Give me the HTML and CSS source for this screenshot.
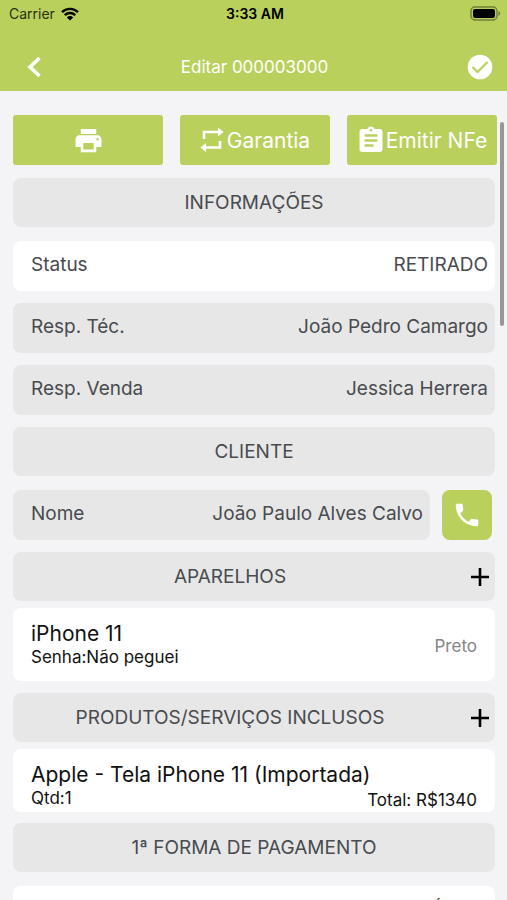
FILE: index.html
```
<!DOCTYPE html>
<html lang="pt-BR">
<head>
  <meta charset="UTF-8">
  <meta name="viewport" content="width=device-width, initial-scale=1.0">
  <title>Editar 000003000</title>
  <link rel="stylesheet" href="styles.css">
</head>
<body>
  <header class="header">
    <div class="status-bar">
      <div class="carrier">
        <span>Carrier</span>
        <svg width="18" height="14" viewBox="0 0 18 14">
          <path d="M1 5.2a11.4 11.4 0 0 1 16 0M3.8 8.1a7.4 7.4 0 0 1 10.4 0" fill="none" stroke="#000" stroke-width="2.4"/>
          <path d="M9 13.6L5.8 10.4a4.6 4.6 0 0 1 6.4 0z"/>
        </svg>
      </div>
      <span class="time">3:33 AM</span>
      <div class="battery">
        <svg width="31" height="15" viewBox="0 0 31 15">
          <rect x="1" y="1" width="26" height="13" rx="4" fill="none" stroke="#000" stroke-opacity=".4" stroke-width="1.4"/>
          <rect x="3" y="3" width="22" height="9" rx="2"/>
          <path d="M28.5 5v5c1-.4 1.7-1.4 1.7-2.5S29.5 5.4 28.5 5z" fill-opacity=".4"/>
        </svg>
      </div>
    </div>
    <nav class="nav-bar">
      <button class="icon-btn back" aria-label="Voltar">
        <svg width="16" height="24" viewBox="0 0 16 24"><path d="M13.5 3L4 12l9.500 9" fill="none" stroke="#fff" stroke-width="3.6"/></svg>
      </button>
      <h1>Editar 000003000</h1>
      <button class="icon-btn save" aria-label="Salvar">
        <svg width="26" height="26" viewBox="0 0 26 26"><circle cx="13" cy="13" r="12.3" fill="#fff"/><path d="M5.500 13l5 5L20.500 8" fill="none" stroke="#b9d05c" stroke-width="2.2"/></svg>
      </button>
    </nav>
  </header>

  <main class="content">
    <div class="actions">
      <button class="action" aria-label="Imprimir">
        <svg width="31" height="31" viewBox="0 0 24 24"><path d="M19 8H5c-1.66 0-3 1.34-3 3v6h4v4h12v-4h4v-6c0-1.66-1.34-3-3-3zm-3 11H8v-5h8v5zm3-7c-.55 0-1-.45-1-1s.45-1 1-1 1 .45 1 1-.45 1-1 1zm-1-9H6v4h12V3z" fill="#fff"/></svg>
      </button>
      <button class="action">
        <svg width="24" height="26" viewBox="0 0 24 26"><path d="M4 12V5h15M20 14v6.500H5" fill="none" stroke="#fff" stroke-width="2.6"/><path d="M18 .5l5.500 4.500-5.500 4.500zM6 16L.5 20.500 6 25z" fill="#fff"/></svg>
        <span>Garantia</span>
      </button>
      <button class="action">
        <svg width="28" height="31" viewBox="1 0 22 24"><path d="M19 3h-4.180C14.4 1.84 13.3 1 12 1s-2.4.84-2.820 2H5c-1.1 0-2 .9-2 2v14c0 1.1.9 2 2 2h14c1.1 0 2-.9 2-2V5c0-1.1-.9-2-2-2zm-7 0c.55 0 1 .45 1 1s-.45 1-1 1-1-.45-1-1 .45-1 1-1zm2 14H7v-2h7v2zm3-4H7v-2h10v2zm0-4H7V7h10v2z" fill="#fff"/></svg>
        <span>Emitir NFe</span>
      </button>
    </div>

    <h2 class="section">INFORMAÇÕES</h2>
    <div class="field editable">
      <label for="status">Status</label>
      <select id="status"><option>RETIRADO</option></select>
    </div>
    <div class="field">
      <label for="tecnico">Resp. Téc.</label>
      <input id="tecnico" type="text" value="João Pedro Camargo" readonly>
    </div>
    <div class="field">
      <label for="venda">Resp. Venda</label>
      <input id="venda" type="text" value="Jessica Herrera" readonly>
    </div>

    <h2 class="section">CLIENTE</h2>
    <div class="client">
      <div class="field">
        <label for="nome">Nome</label>
        <input id="nome" type="text" value="João Paulo Alves Calvo" readonly>
      </div>
      <button class="call" aria-label="Ligar">
        <svg width="30" height="30" viewBox="0 0 24 24"><path d="M6.62 10.79c1.44 2.83 3.76 5.14 6.59 6.59l2.2-2.2c.27-.27.67-.36 1.02-.24 1.12.37 2.33.57 3.57.57.55 0 1 .45 1 1V20c0 .55-.45 1-1 1-9.39 0-17-7.61-17-17 0-.55.45-1 1-1h3.5c.55 0 1 .45 1 1 0 1.25.2 2.45.57 3.57.11.35.03.74-.25 1.02l-2.2 2.2z" fill="#fff"/></svg>
      </button>
    </div>

    <div class="section with-add">
      <h2>APARELHOS</h2>
      <button class="icon-btn add" aria-label="Adicionar aparelho">
        <svg width="18" height="18" viewBox="0 0 18 18"><path d="M9 0v18M0 9h18" stroke="#000" stroke-width="2.6"/></svg>
      </button>
    </div>
    <article class="item device">
      <div>
        <h3>iPhone 11</h3>
        <p>Senha:Não peguei</p>
      </div>
      <span class="color">Preto</span>
    </article>

    <div class="section with-add">
      <h2>PRODUTOS/SERVIÇOS INCLUSOS</h2>
      <button class="icon-btn add" aria-label="Adicionar produto">
        <svg width="18" height="18" viewBox="0 0 18 18"><path d="M9 0v18M0 9h18" stroke="#000" stroke-width="2.6"/></svg>
      </button>
    </div>
    <article class="item product">
      <h3>Apple - Tela iPhone 11 (Importada)</h3>
      <div class="totals">
        <p>Qtd:1</p>
        <p class="total">Total: R$1340</p>
      </div>
    </article>

    <h2 class="section">1ª FORMA DE PAGAMENTO</h2>
    <div class="field editable">
      <select id="forma" aria-label="Forma de pagamento"><option>CRÉDITO</option></select>
    </div>
  </main>
  <div class="scroll-indicator"></div>
</body>
</html>
```
FILE: styles.css
```
* {
  box-sizing: border-box;
}

body {
  margin: 0;
  height: 100vh;
  display: flex;
  flex-direction: column;
  overflow: hidden;
  position: relative;
  background: #f4f4f6;
  color: #484b4f;
  font-family: Inter, "Liberation Sans", sans-serif;
  font-size: 19px;
}

h1, h2, h3, p {
  margin: 0;
  font-weight: 400;
}

h2 {
  font-size: 19px;
}

button, input, select {
  font: inherit;
  color: inherit;
  border: none;
  background: none;
  padding: 0;
  margin: 0;
}

button {
  cursor: pointer;
}

svg {
  display: block;
  flex: none;
}

.header {
  flex: none;
  background: #b9d05c;
}

.status-bar {
  display: grid;
  grid-template-columns: 1fr auto 1fr;
  align-items: center;
  height: 27px;
  padding: 0 6px 0 9px;
  color: #000;
  font-size: 14px;
}

.carrier {
  display: flex;
  align-items: center;
  gap: 6px;
  color: #26300c;
}

.time {
  font-weight: 600;
}

.battery {
  justify-self: end;
}

.nav-bar {
  display: flex;
  align-items: center;
  justify-content: space-between;
  height: 64px;
  padding: 16px 14px 0 26px;
}

.nav-bar h1 {
  color: #fff;
  font-size: 17px;
}

.content {
  flex: 1;
  min-height: 0;
  overflow-y: auto;
  scrollbar-width: none;
  padding: 24px 12px 0 13px;
}

.actions {
  display: grid;
  grid-template-columns: 1fr 1fr 1fr;
  gap: 17px;
  margin-right: -2px;
  margin-bottom: 13px;
}

.action {
  display: flex;
  align-items: center;
  justify-content: center;
  gap: 3px;
  height: 50px;
  border-radius: 3px;
  background: #b9d05c;
  color: #fff;
  font-size: 21px;
  white-space: nowrap;
}

.action:last-child {
  gap: 1px;
}

.section {
  display: flex;
  align-items: center;
  justify-content: center;
  height: 49px;
  margin-bottom: 14px;
  border-radius: 8px;
  background: #e7e7e7;
}

.with-add {
  margin-bottom: 7px;
}

.with-add h2 {
  flex: 1;
  text-align: center;
}

.add {
  display: flex;
  justify-content: flex-end;
  width: 48px;
  padding-right: 6px;
}

.field {
  display: flex;
  align-items: center;
  height: 50px;
  margin-bottom: 12px;
  padding: 0 7px 3px 18px;
  border-radius: 8px;
  background: #e7e7e7;
}

.field label {
  flex: none;
}

.field input,
.field select {
  flex: 1;
  min-width: 0;
  text-align: right;
  text-align-last: right;
  appearance: none;
  outline: none;
}

.editable {
  background: #fff;
}

.client {
  display: flex;
  gap: 12px;
  padding-right: 3px;
}

.client .field {
  flex: 1;
}

.call {
  display: flex;
  align-items: center;
  justify-content: center;
  width: 50px;
  height: 50px;
  border-radius: 8px;
  background: #b9d05c;
}

.item {
  margin-bottom: 12px;
  padding: 13px 18px 0;
  border-radius: 8px;
  background: #fff;
  color: #111;
}

.item h3 {
  font-size: 21px;
  line-height: 26px;
}

.item p {
  font-size: 17px;
  line-height: 20px;
}

.device {
  display: flex;
  justify-content: space-between;
  height: 73px;
}

.color {
  padding-top: 15px;
  color: #858585;
  font-size: 17px;
}

.product {
  height: 63px;
  margin-bottom: 11px;
}

.totals {
  display: flex;
  justify-content: space-between;
}

.totals .total {
  padding-top: 2px;
}

.scroll-indicator {
  position: absolute;
  top: 122px;
  right: 3px;
  width: 4px;
  height: 204px;
  border-radius: 2px;
  background: #97979a;
}
```
